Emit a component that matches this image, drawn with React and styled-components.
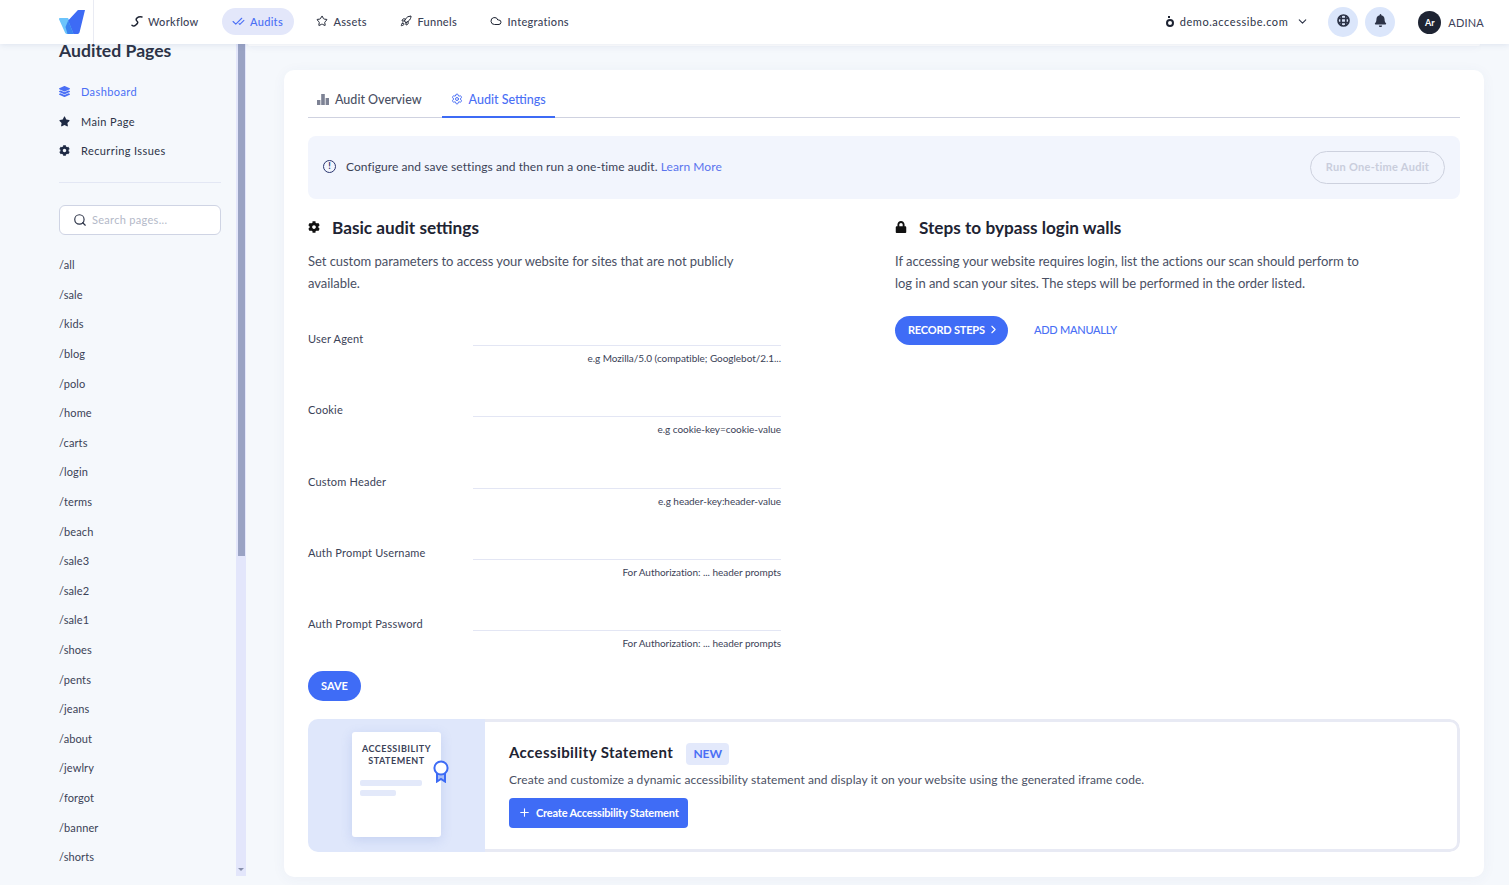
import styled, { createGlobalStyle } from 'styled-components';
import { FaCog, FaStar, FaLock, FaLayerGroup, FaBell } from 'react-icons/fa';
import {
  Search,
  ChevronDown,
  ChevronRight,
  Plus,
  CheckCheck,
  Star,
  Rocket,
  Cloud,
  Settings,
} from 'lucide-react';

const pages = [
  'all', 'sale', 'kids', 'blog', 'polo', 'home', 'carts', 'login', 'terms', 'beach', 'sale3',
  'sale2', 'sale1', 'shoes', 'pents', 'jeans', 'about', 'jewlry', 'forgot', 'banner', 'shorts',
];

const fields = [
  { label: 'User Agent', hint: 'e.g Mozilla/5.0 (compatible; Googlebot/2.1...' },
  { label: 'Cookie', hint: 'e.g cookie-key=cookie-value' },
  { label: 'Custom Header', hint: 'e.g header-key:header-value' },
  { label: 'Auth Prompt Username', hint: 'For Authorization: ... header prompts' },
  { label: 'Auth Prompt Password', hint: 'For Authorization: ... header prompts' },
];

const GlobalStyle = createGlobalStyle`
  html, body {
    margin: 0;
    height: 100%;
    overflow: hidden;
    background: #f5f8fc;
    font-family: Lato, "Open Sans", sans-serif;
    color: #2c3347;
  }
  * {
    box-sizing: border-box;
  }
`;

export default function App() {
  return (
    <Page>
      <GlobalStyle />
      <TopBar>
        <LogoBox>
          <svg width="26" height="24" viewBox="0 0 26 24">
            <path d="M1 8h7.5a1 1 0 0 1 1 .7L15 24H8a2 2 0 0 1-2-1.5L0 9.2A1 1 0 0 1 1 8z" fill="#6cc4fb" />
            <path d="M18 1a2 2 0 0 1 1.6-1H26l-5.5 22.5a2 2 0 0 1-2 1.5h-4L9.2 10.5z" fill="#3d6bf5" />
            <path d="M9.2 10.5L14.5 24H8.5L6.5 17z" fill="#3a83f0" />
          </svg>
        </LogoBox>
        <Nav>
          <NavItem>
            <svg width="12" height="12" viewBox="0 0 12 12" fill="none" stroke="#1e2433" strokeWidth="1.5" strokeLinecap="round">
              <path d="M1 10.2c1.2 1.2 2.8.8 3.8-.2l1.4-1.4c.9-.9.5-2-.3-2.6s-1-1.8-.2-2.6l.6-.6c1-1 2.600-1.100 4.700-.800" />
            </svg>
            Workflow
          </NavItem>
          <NavItem $active><CheckCheck size={13} /> Audits</NavItem>
          <NavItem><Star size={12} color="#1e2433" /> Assets</NavItem>
          <NavItem><Rocket size={12} color="#1e2433" /> Funnels</NavItem>
          <NavItem><Cloud size={12} color="#1e2433" /> Integrations</NavItem>
        </Nav>
        <TopRight>
          <Domain>
            <DomainDot />
            demo.accessibe.com
            <ChevronDown size={13} />
          </Domain>
          <RoundButtons>
            <RoundButton>
              <svg width="13" height="13" viewBox="0 0 13 13" fill="none" stroke="#2c3347" strokeWidth="1.7">
                <circle cx="6.5" cy="6.5" r="5.5" />
                <path d="M4.2 1v11M8.8 1v11M1 4.5h11M1 8.5h11" />
              </svg>
            </RoundButton>
            <RoundButton><FaBell size={13} color="#2c3347" /></RoundButton>
          </RoundButtons>
          <User>
            <Avatar>Ar</Avatar>
            ADINA
          </User>
        </TopRight>
      </TopBar>

      <Body>
        <Sidebar>
          <SideTitle>Audited Pages</SideTitle>
          <SideMenu>
            <SideLink $active><FaLayerGroup size={11} /> Dashboard</SideLink>
            <SideLink><FaStar size={11} /> Main Page</SideLink>
            <SideLink><FaCog size={11} /> Recurring Issues</SideLink>
          </SideMenu>
          <SearchBox>
            <Search size={14} color="#2c3347" />
            Search pages...
          </SearchBox>
          <PageList>
            {pages.map(p => (
              <li key={p}>/{p}</li>
            ))}
          </PageList>
        </Sidebar>
        <ScrollTrack>
          <ScrollThumb />
          <ScrollArrow />
        </ScrollTrack>

        <Main>
          <CardStub />
          <Card>
            <Tabs>
              <Tab>
                <svg width="12" height="11" viewBox="0 0 12 11" fill="#7d8294">
                  <rect x="0" y="6" width="3.4" height="5" />
                  <rect x="4.2" y="0" width="3.6" height="11" />
                  <rect x="8.6" y="4" width="3.4" height="7" />
                </svg>
                Audit Overview
              </Tab>
              <Tab $active><Settings size={12} /> Audit Settings</Tab>
            </Tabs>

            <Banner>
              <BannerText>
                <InfoMark>!</InfoMark>
                Configure and save settings and then run a one-time audit.&nbsp;
                <LearnMore>Learn More</LearnMore>
              </BannerText>
              <RunButton>Run One-time Audit</RunButton>
            </Banner>

            <Columns>
              <div>
                <SectionTitle><FaCog size={12} color="#111" /> Basic audit settings</SectionTitle>
                <SectionText>
                  Set custom parameters to access your website for sites that are not publicly available.
                </SectionText>
                <FieldList>
                  {fields.map(f => (
                    <Field key={f.label}>
                      <FieldLabel>{f.label}</FieldLabel>
                      <FieldInput>
                        <FieldLine />
                        <FieldHint>{f.hint}</FieldHint>
                      </FieldInput>
                    </Field>
                  ))}
                </FieldList>
                <SaveButton>SAVE</SaveButton>
              </div>
              <div>
                <SectionTitle><FaLock size={12} color="#111" /> Steps to bypass login walls</SectionTitle>
                <SectionText>
                  If accessing your website requires login, list the actions our scan should perform to log in and scan your sites. The steps will be performed in the order listed.
                </SectionText>
                <StepActions>
                  <RecordButton>RECORD STEPS <ChevronRight size={13} /></RecordButton>
                  <AddLink>ADD MANUALLY</AddLink>
                </StepActions>
              </div>
            </Columns>

            <Statement>
              <StatementArt>
                <DocSheet>
                  <DocTitle>ACCESSIBILITY STATEMENT</DocTitle>
                  <DocLine $width="62px" />
                  <DocLine $width="36px" />
                  <DocBadge>
                    <svg width="16" height="23" viewBox="0 0 16 23" fill="none" stroke="#3d6bf5" strokeWidth="2">
                      <path d="M4 13V21.5l4-2.5 4 2.5V13" fill="#a9bdf5" />
                      <circle cx="8" cy="8" r="6.6" fill="#fff" />
                    </svg>
                  </DocBadge>
                </DocSheet>
              </StatementArt>
              <StatementBody>
                <StatementHead>
                  <StatementTitle>Accessibility Statement</StatementTitle>
                  <NewBadge>NEW</NewBadge>
                </StatementHead>
                <StatementText>
                  Create and customize a dynamic accessibility statement and display it on your website using the generated iframe code.
                </StatementText>
                <CreateButton><Plus size={13} /> Create Accessibility Statement</CreateButton>
              </StatementBody>
            </Statement>
          </Card>
        </Main>
      </Body>
    </Page>
  );
}

const Page = styled.div`
  height: 885px;
  display: flex;
  flex-direction: column;
  overflow: hidden;
`;

const TopBar = styled.header`
  height: 44px;
  flex: none;
  display: flex;
  align-items: center;
  background: #fff;
  box-shadow: 0 1px 6px rgba(60, 80, 140, 0.12);
  position: relative;
  z-index: 2;
`;

const LogoBox = styled.div`
  width: 94px;
  height: 44px;
  padding: 10px 0 0 59px;
  border-right: 1px solid #e9ebf3;
`;

const Nav = styled.nav`
  display: flex;
  align-items: center;
  gap: 12.5px;
  margin-left: 27px;
  padding-bottom: 1px;
`;

const NavItem = styled.div`
  height: 27px;
  display: flex;
  align-items: center;
  gap: 5px;
  padding: 0 11px 1px 10px;
  border-radius: 14px;
  font-size: 11px;
  letter-spacing: 0.3px;
  font-weight: 500;
  color: ${props => (props.$active ? '#4a6ff5' : '#3b4257')};
  background: ${props => (props.$active ? '#e3e7fa' : 'transparent')};
`;

const TopRight = styled.div`
  margin-left: auto;
  display: flex;
  align-items: center;
  padding-right: 25px;
`;

const Domain = styled.div`
  display: flex;
  align-items: center;
  padding-bottom: 2px;
  font-size: 11px;
  letter-spacing: 0.55px;
  color: #2c3347;
  svg {
    margin-left: 8px;
  }
`;

const DomainDot = styled.span`
  width: 8px;
  height: 8px;
  margin: 3px 6px 0 0;
  position: relative;
  border: 2px solid #1e2433;
  border-radius: 50%;
  &::before {
    content: '';
    position: absolute;
    top: -5px;
    left: 0;
    width: 2px;
    height: 2px;
    background: #1e2433;
  }
`;

const RoundButtons = styled.div`
  display: flex;
  gap: 7px;
  margin-left: 19px;
`;

const RoundButton = styled.div`
  width: 30px;
  height: 30px;
  padding-bottom: 3px;
  border-radius: 50%;
  background: #dbe6fb;
  display: flex;
  align-items: center;
  justify-content: center;
`;

const User = styled.div`
  display: flex;
  align-items: center;
  gap: 7px;
  margin-left: 23px;
  font-size: 11px;
  letter-spacing: 0.2px;
  color: #3b4257;
`;

const Avatar = styled.div`
  width: 23px;
  height: 23px;
  border-radius: 50%;
  background: #1e2433;
  color: #fff;
  font-size: 9px;
  font-weight: 700;
  letter-spacing: 0;
  display: flex;
  align-items: center;
  justify-content: center;
`;

const Body = styled.div`
  flex: 1;
  min-height: 0;
  display: flex;
`;

const Sidebar = styled.aside`
  width: 236px;
  flex: none;
  padding: 0 15px 0 59px;
`;

const SideTitle = styled.h2`
  margin: 0;
  height: 13px;
  line-height: 13px;
  font-size: 17.6px;
  font-weight: 700;
  color: #2c3347;
`;

const SideMenu = styled.div`
  margin-top: 20px;
  padding-bottom: 16px;
  border-bottom: 1px solid #e3e7f4;
`;

const SideLink = styled.div`
  height: 29.6px;
  display: flex;
  align-items: center;
  gap: 11px;
  font-size: 11px;
  letter-spacing: 0.4px;
  color: ${props => (props.$active ? '#4a6ff5' : '#2c3347')};
  svg {
    color: ${props => (props.$active ? '#4a6ff5' : '#1e2a44')};
  }
`;

const SearchBox = styled.div`
  margin-top: 22px;
  height: 30px;
  display: flex;
  align-items: center;
  gap: 5px;
  padding-left: 13px;
  background: #fff;
  border: 1.5px solid #cfd4e4;
  border-radius: 6px;
  font-size: 11px;
  letter-spacing: 0.3px;
  color: #b4b9c8;
`;

const PageList = styled.ul`
  list-style: none;
  margin: 15.5px 0 0;
  padding: 0;
  font-size: 11px;
  letter-spacing: 0.1px;
  color: #3b4257;
  li {
    height: 29.6px;
    line-height: 29.6px;
  }
`;

const ScrollTrack = styled.div`
  width: 10px;
  flex: none;
  height: 832px;
  background: #e3e6fb;
  position: relative;
`;

const ScrollThumb = styled.div`
  height: 512px;
  width: 7px;
  margin-left: 2px;
  background: #9aa3c4;
`;

const ScrollArrow = styled.div`
  position: absolute;
  bottom: 5px;
  left: 2px;
  border-left: 3px solid transparent;
  border-right: 3px solid transparent;
  border-top: 3px solid #8890ad;
`;

const Main = styled.main`
  flex: 1;
  min-width: 0;
`;

const CardStub = styled.div`
  width: 1232px;
  height: 2px;
  margin-left: 2px;
  background: #fff;
  border-radius: 0 0 10px 10px;
  box-shadow: 0 2px 8px rgba(60, 80, 140, 0.06);
`;

const Card = styled.section`
  width: 1200px;
  height: 807px;
  margin: 24px 0 0 38px;
  padding: 12px 24px 0;
  background: #fff;
  border-radius: 10px;
  box-shadow: 0 2px 14px rgba(60, 80, 140, 0.05);
`;

const Tabs = styled.div`
  display: flex;
  height: 36px;
  border-bottom: 1px solid #cfd2e0;
`;

const Tab = styled.div`
  height: 36px;
  display: flex;
  align-items: center;
  gap: 6px;
  padding: 0 9px;
  margin-right: 11px;
  font-size: 12.5px;
  font-weight: 500;
  color: ${props => (props.$active ? '#4a6ff5' : '#4a5064')};
  border-bottom: 2px solid ${props => (props.$active ? '#3d6bf5' : 'transparent')};
  svg {
    color: ${props => (props.$active ? '#4a6ff5' : '#7d8294')};
  }
`;

const Banner = styled.div`
  margin-top: 18px;
  height: 63px;
  display: flex;
  align-items: center;
  justify-content: space-between;
  padding: 0 15px;
  background: #f2f5fd;
  border-radius: 8px;
`;

const BannerText = styled.div`
  display: flex;
  align-items: center;
  padding-bottom: 2px;
  font-size: 12px;
  letter-spacing: 0.07px;
  color: #3b4257;
`;

const InfoMark = styled.span`
  width: 13px;
  height: 13px;
  margin-right: 10px;
  border: 1.3px solid #2a3570;
  border-radius: 50%;
  color: #2a3570;
  font-size: 9px;
  font-weight: 700;
  line-height: 10px;
  text-align: center;
`;

const LearnMore = styled.a`
  color: #5a74ee;
`;

const RunButton = styled.button`
  width: 135px;
  height: 33px;
  padding: 0 0 2px;
  background: transparent;
  border: 1px solid #cdd1de;
  border-radius: 17px;
  font-family: inherit;
  font-size: 11px;
  font-weight: 700;
  letter-spacing: 0.3px;
  color: #c9cddc;
`;

const Columns = styled.div`
  display: grid;
  grid-template-columns: 587px 470px;
  margin-top: 18px;
`;

const SectionTitle = styled.h3`
  margin: 0;
  height: 20px;
  display: flex;
  align-items: center;
  gap: 12px;
  font-size: 17.2px;
  font-weight: 700;
  color: #1e2433;
`;

const SectionText = styled.p`
  margin: 13px 0 0;
  width: 465px;
  font-size: 13px;
  letter-spacing: -0.04px;
  line-height: 22px;
  color: #4a5064;
`;

const FieldList = styled.div`
  margin-top: 27.3px;
  width: 473px;
`;

const Field = styled.div`
  height: 71.2px;
  display: flex;
  &:last-child {
    height: 64.7px;
  }
`;

const FieldLabel = styled.div`
  width: 165px;
  padding-top: 11px;
  font-size: 11px;
  letter-spacing: 0.2px;
  color: #3b4257;
`;

const FieldInput = styled.div`
  width: 308px;
  padding-top: 24px;
  text-align: right;
`;

const FieldLine = styled.div`
  height: 1px;
  background: #e3e6f4;
`;

const FieldHint = styled.div`
  margin-top: 6px;
  font-size: 10px;
  letter-spacing: -0.04px;
  color: #3b4257;
`;

const SaveButton = styled.button`
  display: block;
  width: 53px;
  height: 30px;
  padding: 0;
  border: 0;
  border-radius: 15px;
  background: #3f6cf6;
  color: #fff;
  font-family: inherit;
  font-size: 11px;
  font-weight: 700;
`;

const StepActions = styled.div`
  display: flex;
  align-items: center;
  gap: 26px;
  margin-top: 22px;
`;

const RecordButton = styled.button`
  width: 113px;
  height: 29px;
  display: flex;
  align-items: center;
  gap: 2px;
  padding: 0 0 3px 13px;
  border: 0;
  border-radius: 15px;
  background: #3f6cf6;
  color: #fff;
  font-family: inherit;
  font-size: 11px;
  letter-spacing: -0.2px;
  font-weight: 700;
`;

const AddLink = styled.a`
  margin-bottom: 3px;
  font-size: 11px;
  letter-spacing: -0.25px;
  font-weight: 500;
  color: #4a6ff5;
`;

const Statement = styled.div`
  margin-top: 18px;
  height: 133px;
  display: flex;
  border-radius: 10px;
  overflow: hidden;
`;

const StatementArt = styled.div`
  width: 177px;
  flex: none;
  padding: 13px 0 0 44px;
  background: #dfe7fb;
`;

const DocSheet = styled.div`
  width: 89px;
  height: 105px;
  padding: 11px 8px 0;
  position: relative;
  background: #fff;
  border-radius: 3px;
  box-shadow: 0 3px 12px rgba(80, 110, 200, 0.18);
`;

const DocTitle = styled.div`
  margin-bottom: 13px;
  font-size: 9px;
  letter-spacing: 0.5px;
  line-height: 12px;
  font-weight: 700;
  text-align: center;
  color: #3b4257;
`;

const DocLine = styled.div`
  width: ${props => props.$width};
  height: 6px;
  margin-bottom: 4px;
  border-radius: 2px;
  background: #e3e9fa;
`;

const DocBadge = styled.div`
  position: absolute;
  top: 28px;
  right: -8px;
`;

const StatementBody = styled.div`
  flex: 1;
  padding: 21px 0 0 24px;
  border: 3px solid #e8eaf4;
  border-left: 0;
  border-radius: 0 10px 10px 0;
`;

const StatementHead = styled.div`
  display: flex;
  align-items: center;
  gap: 13px;
`;

const StatementTitle = styled.div`
  margin-bottom: 4px;
  font-size: 15px;
  font-weight: 700;
  letter-spacing: 0.4px;
  color: #1e2433;
`;

const NewBadge = styled.span`
  width: 43px;
  height: 22px;
  line-height: 22px;
  text-align: center;
  border-radius: 4px;
  background: #e3e9fb;
  color: #4a6ff5;
  font-size: 12px;
  font-weight: 700;
`;

const StatementText = styled.p`
  margin: 6px 0 0;
  font-size: 12px;
  letter-spacing: 0.085px;
  line-height: 18px;
  color: #4a5064;
`;

const CreateButton = styled.button`
  width: 179px;
  height: 30px;
  margin-top: 9px;
  display: flex;
  align-items: center;
  gap: 5px;
  padding: 0 0 1px 9px;
  border: 0;
  border-radius: 4px;
  background: #3f6cf6;
  color: #fff;
  font-family: inherit;
  font-size: 11px;
  letter-spacing: -0.2px;
  font-weight: 700;
`;
